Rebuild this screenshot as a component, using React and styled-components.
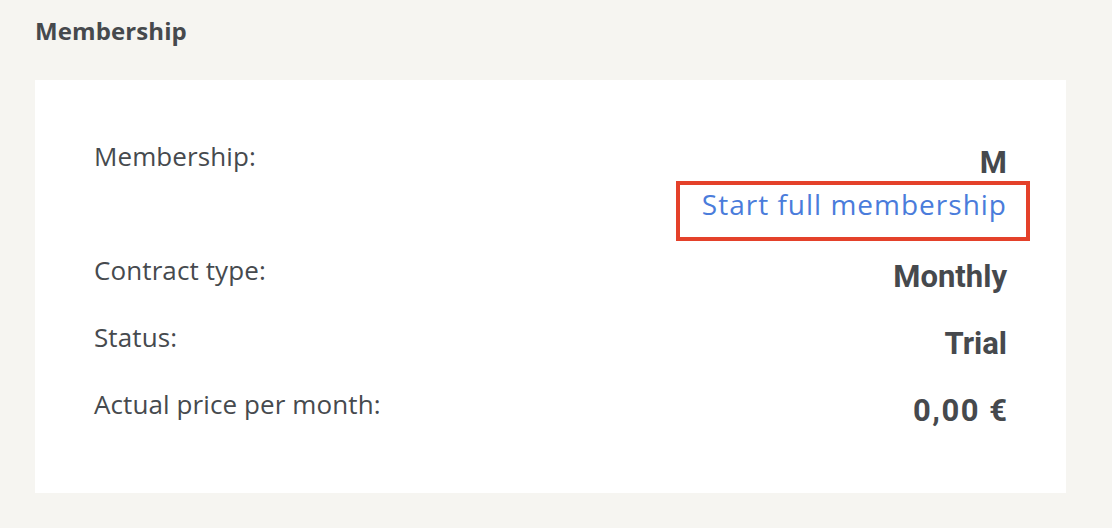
import React from "react";
import styled, { createGlobalStyle } from "styled-components";

const GlobalStyle = createGlobalStyle`
  html, body {
    margin: 0;
    padding: 0;
    background: #f6f5f1;
  }
  body {
    font-family: "Open Sans", "Liberation Sans", sans-serif;
    color: #46494d;
  }
`;

const Page = styled.div`
  min-height: 528px;
  padding: 15px 46px 0 35px;
  box-sizing: border-box;
`;

const Heading = styled.h2`
  margin: 0 0 33px 0;
  font-size: 24px;
  line-height: 32px;
  font-weight: 700;
  letter-spacing: 0.1px;
  color: #46494d;
`;

const Card = styled.section`
  background: #ffffff;
  padding: 59px 59px 64px 59px;
  display: flex;
  flex-direction: column;
  gap: 25px;
`;

const Row = styled.div`
  display: flex;
  justify-content: space-between;
  align-items: flex-start;
`;

const Label = styled.span`
  font-size: 26px;
  line-height: 34px;
  letter-spacing: 0.1px;
  color: #464a4e;
`;

const ValueCol = styled.div`
  display: flex;
  flex-direction: column;
  align-items: flex-end;
`;

// trailing letter-spacing is pulled back so the last glyph stays flush right
const Value = styled.span`
  margin-top: 6px;
  margin-right: ${props => -(props.spacing || 0)}px;
  font-family: Roboto, "Liberation Sans", sans-serif;
  font-size: 31px;
  line-height: 36px;
  font-weight: 700;
  letter-spacing: ${props => props.spacing || 0}px;
  color: #46494d;
`;

const Highlight = styled.div`
  border: 4px solid #e4412a;
  padding: 0 19px 14px 22px;
  margin-right: -23px;
  margin-bottom: -13px;
`;

const ActionLink = styled.a`
  font-size: 28px;
  line-height: 38px;
  letter-spacing: 1px;
  color: #4a7cdb;
  text-decoration: none;
  cursor: pointer;
`;

const rows = [
  { label: "Contract type:", value: "Monthly" },
  { label: "Status:", value: "Trial" },
  { label: "Actual price per month:", value: "0,00 €", spacing: 1.5 },
];

const App = () => {
  return (
    <Page>
      <GlobalStyle />
      <Heading>Membership</Heading>
      <Card>
        <Row>
          <Label>Membership:</Label>
          <ValueCol>
            <Value>M</Value>
            <Highlight>
              <ActionLink>Start full membership</ActionLink>
            </Highlight>
          </ValueCol>
        </Row>
        {rows.map(r => (
          <Row key={r.label}>
            <Label>{r.label}</Label>
            <Value spacing={r.spacing}>{r.value}</Value>
          </Row>
        ))}
      </Card>
    </Page>
  );
};

export default App;
